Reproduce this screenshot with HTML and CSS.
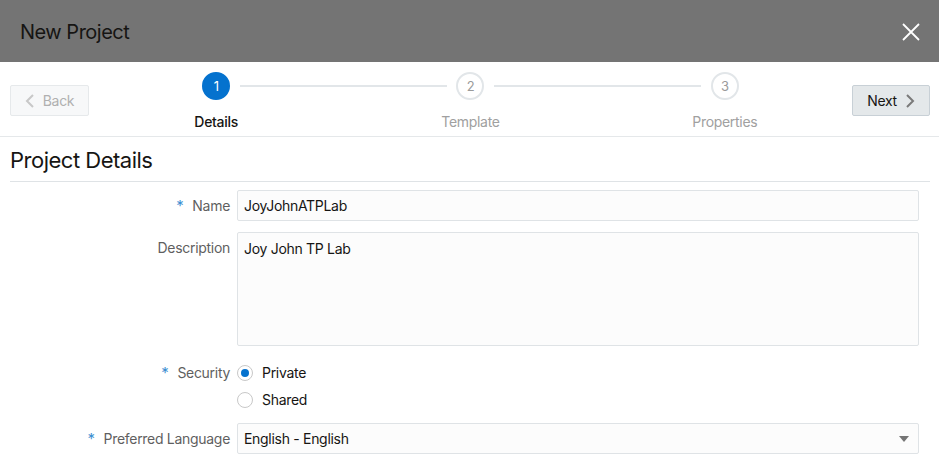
FILE: index.html
```html
<!DOCTYPE html>
<html>
<head>
<meta charset="utf-8">
<link rel="stylesheet" href="styles.css">
</head>
<body>
<div class="dialog">
  <header class="titlebar">
    <h1 class="title">New Project</h1>
    <button class="close" aria-label="Close">
      <svg width="18" height="18" viewBox="0 0 18 18"><path d="M1 1L17 17M17 1L1 17" stroke="#fff" stroke-width="1.8" fill="none"/></svg>
    </button>
  </header>
  <div class="train">
    <button class="btn btn-back">
      <svg width="10" height="14" viewBox="0 0 10 14"><path d="M8 1L2 7l6 6" stroke="#c8c8c8" stroke-width="2" fill="none"/></svg>
      <span>Back</span>
    </button>
    <div class="steps">
      <div class="step step-first step-active">
        <div class="circle">1</div>
        <div class="step-label">Details</div>
      </div>
      <div class="step">
        <div class="circle">2</div>
        <div class="step-label">Template</div>
      </div>
      <div class="step step-last">
        <div class="circle">3</div>
        <div class="step-label">Properties</div>
      </div>
    </div>
    <button class="btn btn-next">
      <span>Next</span>
      <svg width="10" height="14" viewBox="0 0 10 14"><path d="M2 1l6 6-6 6" stroke="#7a7a7a" stroke-width="2" fill="none"/></svg>
    </button>
  </div>
  <section class="section">
    <h2 class="section-title">Project Details</h2>
    <div class="form">
      <div class="row">
        <label class="label required">Name</label>
        <div class="field input">JoyJohnATPLab</div>
      </div>
      <div class="row row-top">
        <label class="label">Description</label>
        <div class="field textarea">Joy John TP Lab</div>
      </div>
      <div class="row row-top row-security">
        <label class="label required label-radio">Security</label>
        <div class="radios">
          <div class="radio-item"><span class="radio radio-on"></span><span>Private</span></div>
          <div class="radio-item"><span class="radio"></span><span>Shared</span></div>
        </div>
      </div>
      <div class="row">
        <label class="label required">Preferred Language</label>
        <div class="field input select">
          <span>English - English</span>
          <svg width="10" height="6" viewBox="0 0 10 6"><path d="M0 0h10L5 6z" fill="#757575"/></svg>
        </div>
      </div>
    </div>
  </section>
</div>
</body>
</html>
```

FILE: styles.css
```css
* { box-sizing: border-box; }
html, body { margin: 0; padding: 0; background: #fff; }
body { font-family: Inter, "Liberation Sans", Arial, sans-serif; color: #161513; width: 939px; height: 472px; overflow: hidden; letter-spacing: -0.3px; }

.titlebar {
  height: 62px;
  background: #747474;
  display: flex;
  align-items: center;
  justify-content: space-between;
  padding: 2px 20px 0 20px;
}
.title { margin: 0; font-size: 20px; font-weight: 400; color: #161513; letter-spacing: -0.5px; }
.close { background: none; border: 0; padding: 0; width: 18px; height: 18px; display: flex; margin-right: -1px; }

.train {
  height: 75px;
  display: flex;
  align-items: center;
  padding: 0 9px 0 10px;
  border-bottom: 1px solid #e5e8ea;
}
.btn {
  height: 31px;
  display: flex;
  align-items: center;
  justify-content: center;
  gap: 8px;
  font-family: inherit;
  font-size: 14px;
  letter-spacing: -0.3px;
  border-radius: 2px;
  padding: 0;
  margin-top: 3px;
}
.btn-back { width: 79px; background: #f7f8f9; border: 1px solid #e6e9eb; color: #b0b0b0; }
.btn-next { width: 78px; background: #e4e8ea; border: 1px solid #c8d0d6; color: #161513; }

.steps { flex: 1; display: flex; align-self: stretch; }
.step {
  flex: 1;
  position: relative;
  display: flex;
  flex-direction: column;
  align-items: center;
  padding-top: 10px;
}
.step::before, .step::after {
  content: "";
  position: absolute;
  top: 23px;
  height: 2px;
  background: #e2e6e9;
}
.step::before { left: 0; right: calc(50% + 24px); }
.step::after { right: 0; left: calc(50% + 24px); }
.step-first::before, .step-last::after { display: none; }
.circle {
  width: 28px; height: 28px;
  border-radius: 50%;
  border: 2px solid #e2e6e9;
  background: #fff;
  color: #9a9a9a;
  font-size: 13px;
  display: flex; align-items: center; justify-content: center;
}
.step-active .circle { background: #0572ce; border-color: #0572ce; color: #fff; }
.step-label { margin-top: 12px; font-size: 14px; line-height: 20px; color: #a0a0a0; }
.step-active .step-label { color: #161513; font-weight: 500; }

.section { padding: 0 9px 0 10px; }
.section-title {
  margin: 0;
  font-size: 22px;
  font-weight: 400;
  letter-spacing: -0.5px;
  line-height: 28px;
  padding: 9px 0 7px;
  border-bottom: 1px solid #dfe3e6;
  color: #161513;
}
.form { padding: 8px 11px 0 0; display: flex; flex-direction: column; gap: 11px; }
.row { display: grid; grid-template-columns: 220px 1fr; column-gap: 7px; align-items: center; }
.row-top { align-items: start; }
.label { text-align: right; font-size: 14px; color: #5f5f5f; }
.row-top .label { padding-top: 7px; }
.required::before { content: "*"; color: #3d8fd1; margin-right: 9px; font-size: 15px; }
.field {
  background: #fcfcfc;
  border: 1px solid #dfe3e6;
  border-radius: 2px;
  font-size: 14px;
  color: #161513;
  padding: 0 6px;
}
.input { height: 31px; display: flex; align-items: center; }
.textarea { height: 114px; padding-top: 7px; }
.select { justify-content: space-between; padding-right: 9px; }

.row-security { margin-top: 6px; }
.row-security .label { padding-top: 0; }
.radios { display: flex; flex-direction: column; gap: 8px; }
.radio-item { display: flex; align-items: center; gap: 9px; font-size: 14px; height: 19px; }
.radio { width: 16px; height: 16px; border-radius: 50%; border: 1px solid #c8c8c8; background: #fff; display: inline-block; position: relative; }
.radio-on::after { content: ""; position: absolute; left: 3px; top: 3px; width: 8px; height: 8px; border-radius: 50%; background: #0572ce; }
.row-security + .row { margin-top: 3px; }
```
